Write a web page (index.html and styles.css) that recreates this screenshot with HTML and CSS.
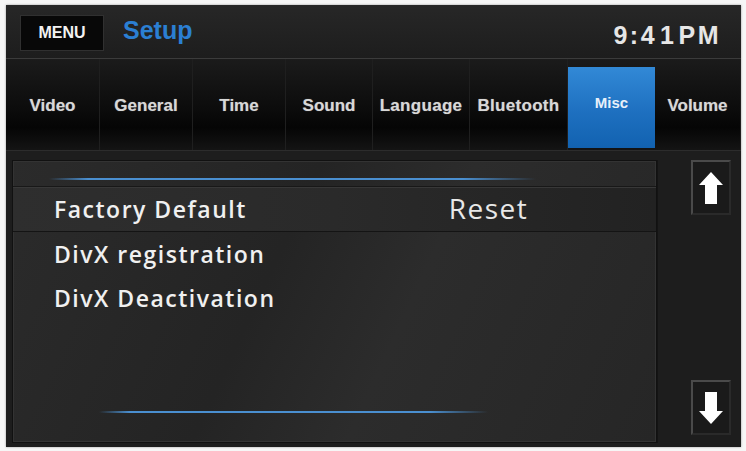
FILE: index.html
```html
<!DOCTYPE html>
<html>
<head>
<meta charset="utf-8">
<link rel="stylesheet" href="styles.css">
</head>
<body>
<div class="screen">
  <div class="header">
    <div class="menu-btn">MENU</div>
    <div class="title">Setup</div>
    <div class="clock">9:4<span class="one">1</span>PM</div>
  </div>
  <div class="tabs">
    <div class="tab">Video</div>
    <div class="tab">General</div>
    <div class="tab">Time</div>
    <div class="tab">Sound</div>
    <div class="tab narrow">Language</div>
    <div class="tab narrow">Bluetooth</div>
    <div class="tab active">Misc</div>
    <div class="tab">Volume</div>
  </div>
  <div class="main">
    <div class="panel">
      <div class="glow top"></div>
      <div class="row selected">
        <span class="label">Factory Default</span>
        <span class="value">Reset</span>
      </div>
      <div class="row"><span class="label">DivX registration</span></div>
      <div class="row"><span class="label">DivX Deactivation</span></div>
      <div class="spacer"></div>
      <div class="glow bottom"></div>
    </div>
    <div class="side">
      <div class="arrow-btn">
        <svg width="26" height="34" viewBox="0 0 26 34"><path d="M13 1 L25 14 L19 14 L19 33 L7 33 L7 14 L1 14 Z" fill="#fff"/></svg>
      </div>
      <div class="arrow-btn">
        <svg width="26" height="34" viewBox="0 0 26 34"><path d="M13 33 L25 20 L19 20 L19 1 L7 1 L7 20 L1 20 Z" fill="#fff"/></svg>
      </div>
    </div>
  </div>
</div>
</body>
</html>
```
FILE: styles.css
```css
html, body {
  margin: 0;
  padding: 0;
  background: #f6f6f6;
}
body {
  width: 746px;
  height: 451px;
  overflow: hidden;
}
.screen {
  margin: 5px 5px 4px 6px;
  height: 442px;
  background: #1c1c1c;
  display: flex;
  flex-direction: column;
  box-shadow: 0 0 2px #999;
}
.header {
  height: 53px;
  display: flex;
  align-items: center;
  background: linear-gradient(#272727, #1d1d1d);
  border-bottom: 1px solid #3b3b3b;
  padding: 0 20px 0 14px;
}
.menu-btn {
  width: 84px;
  height: 36px;
  background: #080808;
  border: 1px solid #303030;
  box-sizing: border-box;
  color: #f2f2f2;
  font: bold 16px "Liberation Sans", Arial, sans-serif;
  display: flex;
  align-items: center;
  justify-content: center;
  margin-top: 2px;
}
.title {
  margin-left: 19px;
  color: #2b7fd2;
  font: bold 25px "Liberation Sans", Arial, sans-serif;
  margin-top: -2px;
}
.clock {
  margin-left: auto;
  color: #e6e6e6;
  font: bold 25px "Liberation Sans", Arial, sans-serif;
  letter-spacing: 2.5px;
  margin-top: 8px;
}
.clock .one {
  padding: 0 2px 0 3px;
}
.tabs {
  height: 91px;
  display: grid;
  grid-template-columns: 94px 93px 93px 87px 97px 98px 87px 1fr;
  background: linear-gradient(#1b1b1b 0%, #0c0c0c 55%, #050505 75%, #141414 100%);
  border-bottom: 1px solid #2c2c2c;
}
.tab {
  display: flex;
  align-items: center;
  justify-content: center;
  color: #d8d8d8;
  font: bold 17px "Liberation Sans", Arial, sans-serif;
  border-right: 1px solid #1f1f1f;
  padding-top: 2px;
  text-shadow: 0 0 1px #777;
}
.tab.narrow {
  font-size: 17px;
  letter-spacing: 0.3px;
}
.tab.active {
  margin: 8px 0 2px 0;
  background: linear-gradient(#3289d6, #1e70c0 55%, #1262b0);
  color: #e6f0fa;
  font-size: 15px;
  padding: 0 0 10px 0;
  border-right: none;
  text-shadow: none;
}
.main {
  flex: 1;
  display: flex;
  padding: 9px 0 4px 6px;
  background: #1d1d1d;
}
.panel {
  width: 643px;
  background: linear-gradient(115deg, #2b2b2b 0%, #242424 40%, #2c2c2c 60%, #262626 100%);
  border: 1px solid #111;
  box-shadow: inset 0 0 0 1px #333;
  display: flex;
  flex-direction: column;
}
.glow {
  height: 2px;
  background: linear-gradient(90deg, rgba(60,140,220,0) 0%, #4a8fd0 8%, #4a8fd0 85%, rgba(60,140,220,0) 100%);
}
.glow.top {
  margin: 17px 120px 0 36px;
}
.glow.bottom {
  margin: 0 168px 29px 86px;
}
.row {
  height: 44px;
  display: flex;
  align-items: center;
  padding-left: 41px;
  color: #f0f0f0;
  font: 600 23px "Open Sans", sans-serif;
  letter-spacing: 1.5px;
}
.row.selected {
  margin-top: 6px;
  height: 44px;
  border-top: 1px solid #181818;
  border-bottom: 1px solid #141414;
  background: linear-gradient(90deg, #2e2e2e 0%, #2a2a2a 50%, #222 100%);
  box-shadow: inset 0 1px 0 #383838;
}
.value {
  margin-left: 202px;
  font: 400 28px "Open Sans", sans-serif;
  letter-spacing: 1.5px;
  color: #e8e8e8;
  margin-top: -2px;
}
.spacer {
  flex: 1;
}
.side {
  flex: 1;
  display: flex;
  flex-direction: column;
  justify-content: space-between;
  align-items: flex-end;
  padding: 0 10px 8px 0;
  border-left: 1px solid #141414;
}
.arrow-btn {
  width: 40px;
  height: 55px;
  box-sizing: border-box;
  background: #1a1a1a;
  border: 2px solid #4a4a4a;
  border-right-color: #2a2a2a;
  border-bottom-color: #2a2a2a;
  display: flex;
  align-items: center;
  justify-content: center;
}
```
